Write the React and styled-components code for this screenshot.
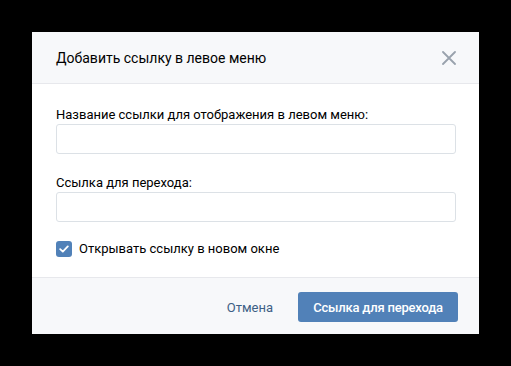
import React, { useState } from "react";
import styled, { createGlobalStyle } from "styled-components";

const GlobalStyle = createGlobalStyle`
  html, body {
    margin: 0;
    padding: 0;
    background: #000;
  }
  body {
    font-family: Roboto, "Liberation Sans", Arial, sans-serif;
    -webkit-font-smoothing: antialiased;
  }
`;

const Screen = styled.div`
  width: 511px;
  height: 366px;
  display: flex;
  align-items: center;
  justify-content: center;
  background: #000;
`;

const Dialog = styled.div`
  width: 447px;
  background: #fff;
  display: flex;
  flex-direction: column;
`;

const Header = styled.div`
  height: 51px;
  display: flex;
  align-items: center;
  justify-content: space-between;
  padding: 0 23px 0 24px;
  background: #f7f8fa;
  border-bottom: 1px solid #e7e8ec;
`;

const Title = styled.h2`
  margin: 0;
  font-size: 14px;
  font-weight: 400;
  color: #000;
`;

const CloseButton = styled.button`
  width: 14px;
  height: 14px;
  padding: 0;
  border: 0;
  background: none;
  cursor: pointer;
  display: flex;
`;

const Body = styled.div`
  padding: 23px 23px 20px 24px;
  display: flex;
  flex-direction: column;
`;

const Field = styled.div`
  display: flex;
  flex-direction: column;
  gap: 1px;
  margin-bottom: ${(p) => p.$gap || 0}px;
`;

const Label = styled.label`
  font-size: 13px;
  line-height: 16px;
  color: #000;
`;

const Input = styled.input`
  box-sizing: border-box;
  height: 30px;
  width: 100%;
  border: 1px solid #dce1e6;
  border-radius: 3px;
  padding: 0 9px;
  font: inherit;
  font-size: 13px;
  outline: none;
`;

const CheckRow = styled.label`
  display: flex;
  align-items: center;
  gap: 7px;
  font-size: 13px;
  line-height: 16px;
  color: #000;
  cursor: pointer;
`;

const Box = styled.span`
  width: 16px;
  height: 16px;
  border-radius: 3px;
  background: ${(p) => (p.$on ? "#5181b8" : "#fff")};
  border: ${(p) => (p.$on ? "none" : "1px solid #c1c9d1")};
  box-sizing: border-box;
  display: flex;
  align-items: center;
  justify-content: center;
`;

const Footer = styled.div`
  height: 54px;
  display: flex;
  align-items: center;
  justify-content: flex-end;
  gap: 25px;
  padding: 2px 21px 0 0;
  box-sizing: content-box;
  background: #f7f8fa;
  border-top: 1px solid #e7e8ec;
`;

const LinkButton = styled.button`
  border: 0;
  background: none;
  padding: 0;
  font: inherit;
  font-size: 13px;
  color: #3d5f85;
  cursor: pointer;
`;

const PrimaryButton = styled.button`
  width: 160px;
  height: 30px;
  border: 0;
  border-radius: 3px;
  background: #5181b8;
  color: #fff;
  font: inherit;
  font-size: 13px;
  font-weight: 500;
  letter-spacing: -0.2px;
  cursor: pointer;
`;

const App = () => {
  const [checked, setChecked] = useState(true);
  return (
    <>
      <GlobalStyle />
      <Screen>
        <Dialog>
          <Header>
            <Title>Добавить ссылку в левое меню</Title>
            <CloseButton aria-label="Закрыть">
              <svg width="14" height="14" viewBox="0 0 14 14">
                <path
                  d="M1 1L13 13M13 1L1 13"
                  stroke="#99a2ad"
                  strokeWidth="1.8"
                  strokeLinecap="round"
                />
              </svg>
            </CloseButton>
          </Header>
          <Body>
            <Field $gap={21}>
              <Label>Название ссылки для отображения в левом меню:</Label>
              <Input />
            </Field>
            <Field $gap={19}>
              <Label>Ссылка для перехода:</Label>
              <Input />
            </Field>
            <CheckRow onClick={() => setChecked(!checked)}>
              <Box $on={checked}>
                {checked && (
                  <svg width="10" height="8" viewBox="0 0 10 8">
                    <path
                      d="M1.2 4.2L3.8 6.6L8.8 1.4"
                      stroke="#fff"
                      strokeWidth="1.8"
                      fill="none"
                      strokeLinecap="round"
                      strokeLinejoin="round"
                    />
                  </svg>
                )}
              </Box>
              Открывать ссылку в новом окне
            </CheckRow>
          </Body>
          <Footer>
            <LinkButton>Отмена</LinkButton>
            <PrimaryButton>Ссылка для перехода</PrimaryButton>
          </Footer>
        </Dialog>
      </Screen>
    </>
  );
};

export default App;
